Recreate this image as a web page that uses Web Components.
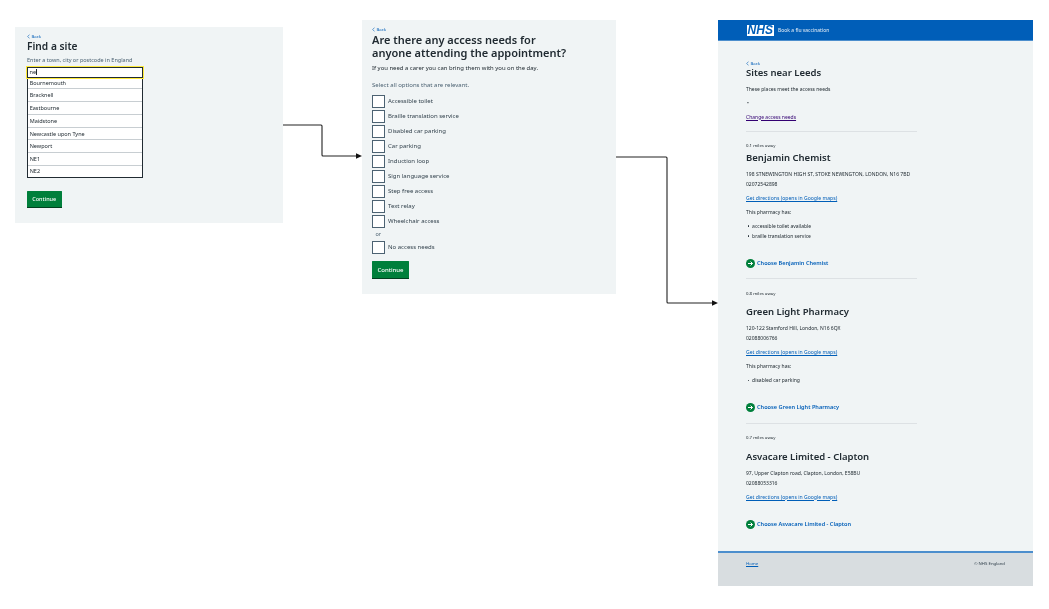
<!DOCTYPE html>
<html lang="en"><head><meta charset="utf-8"><title>Book a flu vaccination flow</title>
<style>
html,body{margin:0;background:#fff;width:1049px;height:609px;overflow:hidden}
body{position:relative;font-family:"Noto Sans","Open Sans",sans-serif;color:#212b32}
u{text-decoration-thickness:.5px}
</style></head><body>
<flow-arrows></flow-arrows>

<flow-frame style="left:15px;top:27px;width:268px;height:196px;filter:blur(.25px)" pad="6px 12px">
  <back-link>Back</back-link>
  <page-title size="10.2" lh="13" top="0">Find a site</page-title>
  <body-text size="5.5" lh="8" top="2.5" color="#4c6272">Enter a town, city or postcode in England</body-text>
  <site-autocomplete value="ne" top="3">
    <span>Bournemouth</span><span>Bracknell</span><span>Eastbourne</span><span>Maidstone</span><span>Newcastle upon Tyne</span><span>Newport</span><span>NE1</span><span>NE2</span>
  </site-autocomplete>
  <green-button w="34.5" h="17.5" top="13.2" size="5.5">Continue</green-button>
</flow-frame>

<flow-frame style="left:362px;top:20px;width:254px;height:274px;filter:blur(.25px)" pad="6px 10px">
  <back-link>Back</back-link>
  <page-title size="11" lh="13" top="0">Are there any access needs for<br>anyone attending the appointment?</page-title>
  <body-text size="5.95" lh="8" top="5.3">If you need a carer you can bring them with you on the day.</body-text>
  <body-text size="6" lh="8" top="8.4" color="#4c6272">Select all options that are relevant.</body-text>
  <check-list top="6">
    <check-row>Accessible toilet</check-row>
    <check-row>Braille translation service</check-row>
    <check-row>Disabled car parking</check-row>
    <check-row>Car parking</check-row>
    <check-row>Induction loop</check-row>
    <check-row>Sign language service</check-row>
    <check-row>Step free access</check-row>
    <check-row>Text relay</check-row>
    <check-row>Wheelchair access</check-row>
    <body-text size="5.5" lh="8" top="0" left="3.5" color="#4c6272">or</body-text>
    <check-row style="margin-top:1px">No access needs</check-row>
  </check-list>
  <green-button w="37" h="18.7" top="7" size="6">Continue</green-button>
</flow-frame>

<flow-frame style="left:718px;top:20px;width:315px;height:566px;filter:blur(.45px)">
  <nhs-header>Book a flu vaccination</nhs-header>
  <results-main>
    <back-link>Back</back-link>
    <page-title size="9.5" lh="12" top="0">Sites near Leeds</page-title>
    <body-text size="5" lh="8" top="6">These places meet the access needs</body-text>
    <body-text size="5" lh="8" top="6" left="1">•</body-text>
    <body-text size="5" lh="8" top="6" color="#330072"><u>Change access needs</u></body-text>
    <site-card miles="0.1 miles away" name="Benjamin Chemist" gap="3" addr="198 STNEWINGTON HIGH ST, STOKE NEWINGTON, LONDON, N16 7BD" phone="02072542898" has="accessible toilet available|braille translation service"></site-card>
    <site-card miles="0.8 miles away" name="Green Light Pharmacy" gap="9.7" addr="120-122 Stamford Hill, London, N16 6QX" phone="02088006766" has="disabled car parking"></site-card>
    <site-card miles="0.7 miles away" name="Asvacare Limited - Clapton" gap="9.7" addr="97, Upper Clapton road, Clapton, London, E58BU" phone="02088053316"></site-card>
  </results-main>
  <nhs-footer></nhs-footer>
</flow-frame>

<script>
function define(name, css, html, setup){
  customElements.define(name, class extends HTMLElement{
    connectedCallback(){
      if(this.shadowRoot) return;
      const r=this.attachShadow({mode:'open'});
      const h=typeof html==='function'?html(this):html;
      r.innerHTML='<style>'+css+'</style>'+h;
      if(setup) setup(this,r);
    }
  });
}
const at=(e,n,d)=>e.hasAttribute(n)?e.getAttribute(n):d;

define('flow-arrows',`:host{position:absolute;inset:0;display:block}svg{position:absolute;left:0;top:0}`,
`<svg width="1049" height="609" viewBox="0 0 1049 609" fill="none">
<path d="M283 125H321a1 1 0 0 1 1 1V155a1 1 0 0 0 1 1H358" stroke="#222" stroke-width="1.1"/>
<path d="M356 153.2L362 156L356 158.8Z" fill="#111"/>
<path d="M616 157H666a1 1 0 0 1 1 1V302a1 1 0 0 0 1 1H714" stroke="#222" stroke-width="1.1"/>
<path d="M712 300.2L718 303L712 305.8Z" fill="#111"/></svg>`);

define('flow-frame',`:host{position:absolute;display:flex;flex-direction:column;background:#f0f4f5;box-sizing:border-box}`,`<slot></slot>`,(e)=>{if(e.hasAttribute('pad'))e.style.padding=e.getAttribute('pad');});

define('back-link',`:host{display:flex;align-items:center;gap:1.5px;height:7px;font-size:4.3px;color:#005eb8;line-height:7px}svg{width:3px;height:5px}`,
`<svg viewBox="0 0 3 5" fill="none"><path d="M2.5 .6L.7 2.5L2.5 4.4" stroke="#005eb8" stroke-width=".6"/></svg><slot></slot>`);

define('page-title',`:host{display:block;font-weight:600;color:#212b32}`,`<slot></slot>`,(e)=>{
  e.style.fontSize=at(e,'size',10)+'px';e.style.lineHeight=at(e,'lh',13)+'px';e.style.marginTop=at(e,'top',0)+'px';});

define('body-text',`:host{display:block;white-space:nowrap}`,`<slot></slot>`,(e)=>{
  e.style.fontSize=at(e,'size',5)+'px';e.style.lineHeight=at(e,'lh',8)+'px';e.style.marginTop=at(e,'top',0)+'px';
  e.style.marginLeft=at(e,'left',0)+'px';if(e.hasAttribute('color'))e.style.color=e.getAttribute('color');});

define('site-autocomplete',`:host{display:block;width:116px;font-size:5.5px;color:#212b32}
.in{box-sizing:border-box;height:11.7px;border:1px solid #212b32;outline:1px solid #ffeb3b;background:#fff;padding-left:1.5px;display:flex;align-items:center;position:relative}
.c{width:.5px;height:6px;background:#212b32;margin-left:.3px}
.l{box-sizing:border-box;border:solid #212b32;border-width:0 .7px .7px;background:#fff;display:flex;flex-direction:column}
::slotted(span){box-sizing:border-box;height:12.8px;line-height:12.8px;padding-left:1.7px;border-bottom:.7px solid #c8ced2;white-space:nowrap}
::slotted(span:first-child){height:11px;line-height:10.6px}
::slotted(span:last-child){height:10.8px;line-height:10.8px;border-bottom:0}`,
(e)=>`<div class="in">${at(e,'value','')}<span class="c"></span></div><div class="l"><slot></slot></div>`,
(e)=>{e.style.marginTop=at(e,'top',0)+'px';});

define('green-button',`:host{display:flex;align-items:center;justify-content:center;box-sizing:border-box;background:#007f3b;color:#fff;font-weight:500;border-bottom:1px solid #00401e;border-radius:.5px}`,
`<slot></slot>`,(e)=>{e.style.width=at(e,'w',34)+'px';e.style.height=at(e,'h',17)+'px';e.style.marginTop=at(e,'top',0)+'px';e.style.fontSize=at(e,'size',5.3)+'px';});

define('check-list',`:host{display:flex;flex-direction:column;gap:2px}`,`<slot></slot>`,(e)=>{e.style.marginTop=at(e,'top',0)+'px';});

define('check-row',`:host{display:flex;align-items:center;gap:3px;height:13px;font-size:6px;color:#33424d}
.b{box-sizing:border-box;width:13px;height:13px;border:.8px solid #4c6272;background:#fff}`,
`<span class="b"></span><slot></slot>`);

define('nhs-header',`:host{display:flex;align-items:center;gap:4px;box-sizing:border-box;height:21px;background:#005eb8;padding-left:28.5px;color:#e8f0f8;font-size:5px;border-bottom:.6px solid #4c8ecd}
.logo{display:flex;align-items:center;justify-content:center;width:27.5px;height:11px;background:#fff;color:#005eb8;font:italic 700 12px/11px "Liberation Sans",sans-serif}`,
`<span class="logo">NHS</span><slot></slot>`);

define('results-main',`:host{flex:1;display:flex;flex-direction:column;padding:18.5px 116px 0 28px;min-height:0}`,`<slot></slot>`);

define('site-card',`:host{display:block}
hr{border:0;border-top:.7px solid #dde1e4;margin:10.3px 0 0;height:0}
.m{font-size:4.3px;line-height:8px;margin-top:9.3px;white-space:nowrap}
h2{margin:0;font-size:9.5px;line-height:12px;font-weight:600}
p{margin:0;font-size:5px;line-height:10px;white-space:nowrap}
.a{margin-top:5px}
.d{color:#005eb8;text-decoration:underline;text-decoration-thickness:.5px;margin-top:4px;font-size:5.1px}
.t{margin-top:4px}
ul{margin:4px 0 0;padding:0 0 0 1.5px;list-style:none;font-size:5px;line-height:10px}
li{display:flex;align-items:center;gap:3px;white-space:nowrap}
li::before{content:"";width:1.6px;height:1.6px;border-radius:50%;background:#212b32}
.c{display:flex;align-items:center;gap:2px;color:#005eb8;font-weight:600;font-size:5.6px;line-height:9px;white-space:nowrap;margin-top:18px}
svg{width:9px;height:9px}`,
(e)=>{
 const has=at(e,'has','');
 const list=has?`<p class="t">This pharmacy has:</p><ul>${has.split('|').map(x=>`<li>${x}</li>`).join('')}</ul>`:'';
 return `<hr><div class="m">${at(e,'miles','')}</div>
 <h2 style="margin-top:${at(e,'gap',3)}px">${at(e,'name','')}</h2>
 <p class="a">${at(e,'addr','')}</p><p>${at(e,'phone','')}</p>
 <p class="d">Get directions (opens in Google maps)</p>${list}
 <div class="c"><svg viewBox="0 0 9 9"><circle cx="4.5" cy="4.5" r="4.5" fill="#007f3b"/><path d="M2 4.5H6.4M4.6 2.6L6.5 4.5L4.6 6.4" stroke="#fff" stroke-width="1" fill="none"/></svg><span>Choose ${at(e,'name','')}</span></div>`;
});

define('nhs-footer',`:host{display:flex;justify-content:space-between;box-sizing:border-box;height:35.5px;background:#d8dde0;border-top:2px solid #4c8ecd;padding:6.5px 28px 0;font-size:4.3px;line-height:8px;color:#33424d}
u{color:#005eb8;text-decoration-thickness:.5px}`,`<u>Home</u><span>© NHS England</span>`);
</script>
</body></html>
